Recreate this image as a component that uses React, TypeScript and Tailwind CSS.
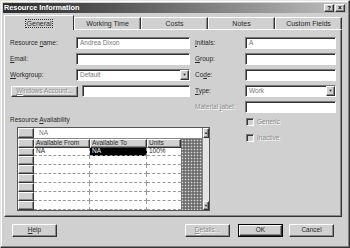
import React from "react";

const sunken =
  "border border-t-[#777] border-l-[#777] border-b-white border-r-white shadow-[inset_1px_1px_0_#333]";
const raised =
  "border border-t-white border-l-white border-b-[#333] border-r-[#333] shadow-[inset_-1px_-1px_0_#888]";
const disabledText = "text-[#8c8c8c] [text-shadow:1px_1px_0_#fff]";
const dotted =
  "bg-[#6e6e6e] bg-[radial-gradient(circle,#d8d8d8_0.7px,transparent_1.1px)] bg-[length:3px_3px]";

function U({ children }: { children: React.ReactNode }) {
  return <span className="underline underline-offset-[1px]">{children}</span>;
}

function Field({
  label,
  value,
  labelW,
  inputW,
  dropdown,
  labelDisabled,
}: {
  label: React.ReactNode;
  value?: string;
  labelW: string;
  inputW: string;
  dropdown?: boolean;
  labelDisabled?: boolean;
}) {
  return (
    <div className="flex items-center h-[12px]">
      <div className={`${labelW} ${labelDisabled ? disabledText : ""}`}>
        <span>{label}</span>
      </div>
      <div className={`${inputW} h-full bg-white ${sunken} flex items-center`}>
        <span className="flex-1 pl-[3px] text-[#777]">{value}</span>
        {dropdown && (
          <div className={`w-[9px] h-[10px] bg-[#d0d0d0] ${raised} flex items-center justify-center text-[4px] text-[#222]`}>
            ▼
          </div>
        )}
      </div>
    </div>
  );
}

function DataRow({ first }: { first?: boolean }) {
  return (
    <div className="flex h-[10px]">
      <div className={`w-[16px] h-full bg-[#d0d0d0] ${raised}`} />
      <div className="w-[56px] h-full bg-white border-b border-r border-dashed border-[#999] pl-[2px] flex items-center">
        {first ? "NA" : ""}
      </div>
      <div
        className={`w-[57px] h-full border-b border-r border-dashed border-[#999] pl-[2px] flex items-center ${
          first ? "bg-black text-white" : "bg-white"
        }`}
      >
        {first ? "NA" : ""}
      </div>
      <div className="w-[34px] h-full bg-white border-b border-dashed border-[#999] pl-[2px] flex items-center">
        {first ? "100%" : ""}
      </div>
    </div>
  );
}

function Btn({
  children,
  disabled,
  def,
  className,
}: {
  children: React.ReactNode;
  disabled?: boolean;
  def?: boolean;
  className?: string;
}) {
  return (
    <div className={`w-[45px] h-[13px] ${def ? "border border-black" : ""} ${className ?? ""}`}>
      <div
        className={`w-full h-full bg-[#d0d0d0] ${raised} flex items-center justify-center ${
          disabled ? disabledText : ""
        }`}
      >
        {children}
      </div>
    </div>
  );
}

export default function App() {
  return (
    <div className="w-[350px] h-[248px] bg-[#d0d0d0] font-['Liberation_Sans',Arial,sans-serif] text-[6.5px] leading-none text-[#2a2a2a] flex flex-col border border-t-[#e6e6e6] border-l-[#e6e6e6] border-r-[#333] border-b-[#333] shadow-[inset_-1px_-1px_0_#808080,inset_1px_1px_0_#fff] p-[2px] overflow-hidden">
      {/* Title bar */}
      <div className="h-[10px] flex items-center justify-between bg-linear-to-r from-[#2c2c2c] to-[#bfbfbf] pl-[1px] pr-[2px]">
        <span className="text-white font-bold text-[7.3px]">Resource Information</span>
        <div className="flex gap-[1px]">
          <div className={`w-[10px] h-[8px] bg-[#d0d0d0] ${raised} flex items-center justify-center font-bold text-[6px] text-black`}>
            ?
          </div>
          <div className={`w-[10px] h-[8px] bg-[#d0d0d0] ${raised} flex items-center justify-center font-bold text-[6.5px] text-black`}>
            ×
          </div>
        </div>
      </div>

      {/* Tabs */}
      <div className="mt-[2px] h-[14px] flex items-end pl-[1px] relative z-10">
        <div className="w-[70px] h-[15px] -mb-[1px] bg-[#d0d0d0] border-t border-l border-t-white border-l-white border-r border-r-[#333] flex items-center justify-center text-[7px]">
          <span className="outline outline-1 outline-dotted outline-[#333] px-[1px]">General</span>
        </div>
        {["Working Time", "Costs", "Notes", "Custom Fields"].map((t) => (
          <div
            key={t}
            className="w-[67px] h-[12px] border-t border-l border-t-white border-l-white border-r border-r-[#333] shadow-[inset_-1px_0_0_#888] flex items-center justify-center text-[7px]"
          >
            {t}
          </div>
        ))}
      </div>

      {/* Panel */}
      <div className="ml-[1px] w-[338px] h-[188px] border border-t-white border-l-white border-r-[#333] border-b-[#333] shadow-[inset_-1px_-1px_0_#888] flex pt-[7px] pl-[5px]">
        {/* Left column */}
        <div className="w-[180px] flex flex-col">
          <div className="flex flex-col gap-[4px]">
            <Field label={<>Resource <U>n</U>ame:</>} value="Andrea Dixon" labelW="w-[66px]" inputW="w-[114px]" />
            <Field label={<><U>E</U>mail:</>} labelW="w-[66px]" inputW="w-[114px]" />
            <Field label={<><U>W</U>orkgroup:</>} value="Default" labelW="w-[66px]" inputW="w-[114px]" dropdown />
            <div className="flex items-center h-[12px]">
              <div className={`ml-[1px] w-[67px] h-[11px] bg-[#d0d0d0] ${raised} flex items-center justify-center ${disabledText}`}>
                <span><U>W</U>indows Account...</span>
              </div>
              <div className={`ml-[4px] flex-1 h-full bg-white ${sunken}`} />
            </div>
          </div>

          <div className="mt-[19px] h-[8px] flex items-center">
            <span>Resource <U>A</U>vailability</span>
          </div>

          {/* Table */}
          <div className="mt-[3px] ml-[7px] w-[193px] h-[84px] flex border border-[#555] bg-[#d0d0d0]">
            <div className="w-[184px] flex flex-col">
              <div className="h-[11px] flex border-b border-[#888]">
                <div className={`w-[16px] h-full bg-[#d0d0d0] ${raised}`} />
                <div className="flex-1 h-full bg-white pl-[5px] flex items-center text-[#777]">NA</div>
              </div>
              <div className="flex flex-1 min-h-0">
                <div className="w-[163px] flex flex-col overflow-hidden">
                  <div className="flex h-[9px]">
                    <div className={`w-[16px] h-full bg-[#d0d0d0] ${raised}`} />
                    <div className={`w-[56px] h-full bg-[#d0d0d0] ${raised} pl-[1px] flex items-center`}>Available From</div>
                    <div className={`w-[57px] h-full bg-[#d0d0d0] ${raised} pl-[1px] flex items-center`}>Available To</div>
                    <div className={`w-[34px] h-full bg-[#d0d0d0] ${raised} pl-[1px] flex items-center`}>Units</div>
                  </div>
                  <DataRow first />
                  <DataRow />
                  <DataRow />
                  <DataRow />
                  <DataRow />
                  <DataRow />
                  <DataRow />
                </div>
                <div className={`w-[21px] ${dotted}`} />
              </div>
            </div>
            <div className="w-[9px] flex flex-col border-l border-[#888]">
              <div className={`h-[10px] bg-[#d0d0d0] ${raised} flex items-center justify-center text-[4px] text-[#222]`}>▲</div>
              <div className="flex-1 bg-[#e4e4e4]" />
              <div className={`h-[9px] bg-[#d0d0d0] ${raised} flex items-center justify-center text-[4px] text-[#222]`}>▼</div>
            </div>
          </div>
        </div>

        {/* Right column */}
        <div className="ml-[5px] w-[141px] flex flex-col">
          <div className="flex flex-col gap-[4px]">
            <Field label={<><U>I</U>nitials:</>} value="A" labelW="w-[50px]" inputW="w-[91px]" />
            <Field label={<><U>G</U>roup:</>} labelW="w-[50px]" inputW="w-[91px]" />
            <Field label={<>Co<U>d</U>e:</>} labelW="w-[50px]" inputW="w-[91px]" />
            <Field label={<><U>T</U>ype:</>} value="Work" labelW="w-[50px]" inputW="w-[91px]" dropdown />
            <Field label={<>Material <U>l</U>abel:</>} labelW="w-[50px]" inputW="w-[91px]" labelDisabled />
          </div>
          <div className="mt-[5px] h-[8px] flex items-center pl-[51px]">
            <div className={`w-[8px] h-[8px] bg-[#d0d0d0] ${sunken}`} />
            <span className={`ml-[3px] ${disabledText}`}>Generic</span>
          </div>
          <div className="mt-[8px] h-[8px] flex items-center pl-[51px]">
            <div className={`w-[8px] h-[8px] bg-[#d0d0d0] ${sunken}`} />
            <span className={`ml-[3px] ${disabledText}`}>Inactive</span>
          </div>
        </div>
      </div>

      {/* Buttons */}
      <div className="mt-[7px] flex">
        <Btn className="ml-[9px]"><span><U>H</U>elp</span></Btn>
        <Btn className="ml-[128px]" disabled><span><U>D</U>etails...</span></Btn>
        <Btn className="ml-[8px]" def>OK</Btn>
        <Btn className="ml-[6px]">Cancel</Btn>
      </div>
    </div>
  );
}
